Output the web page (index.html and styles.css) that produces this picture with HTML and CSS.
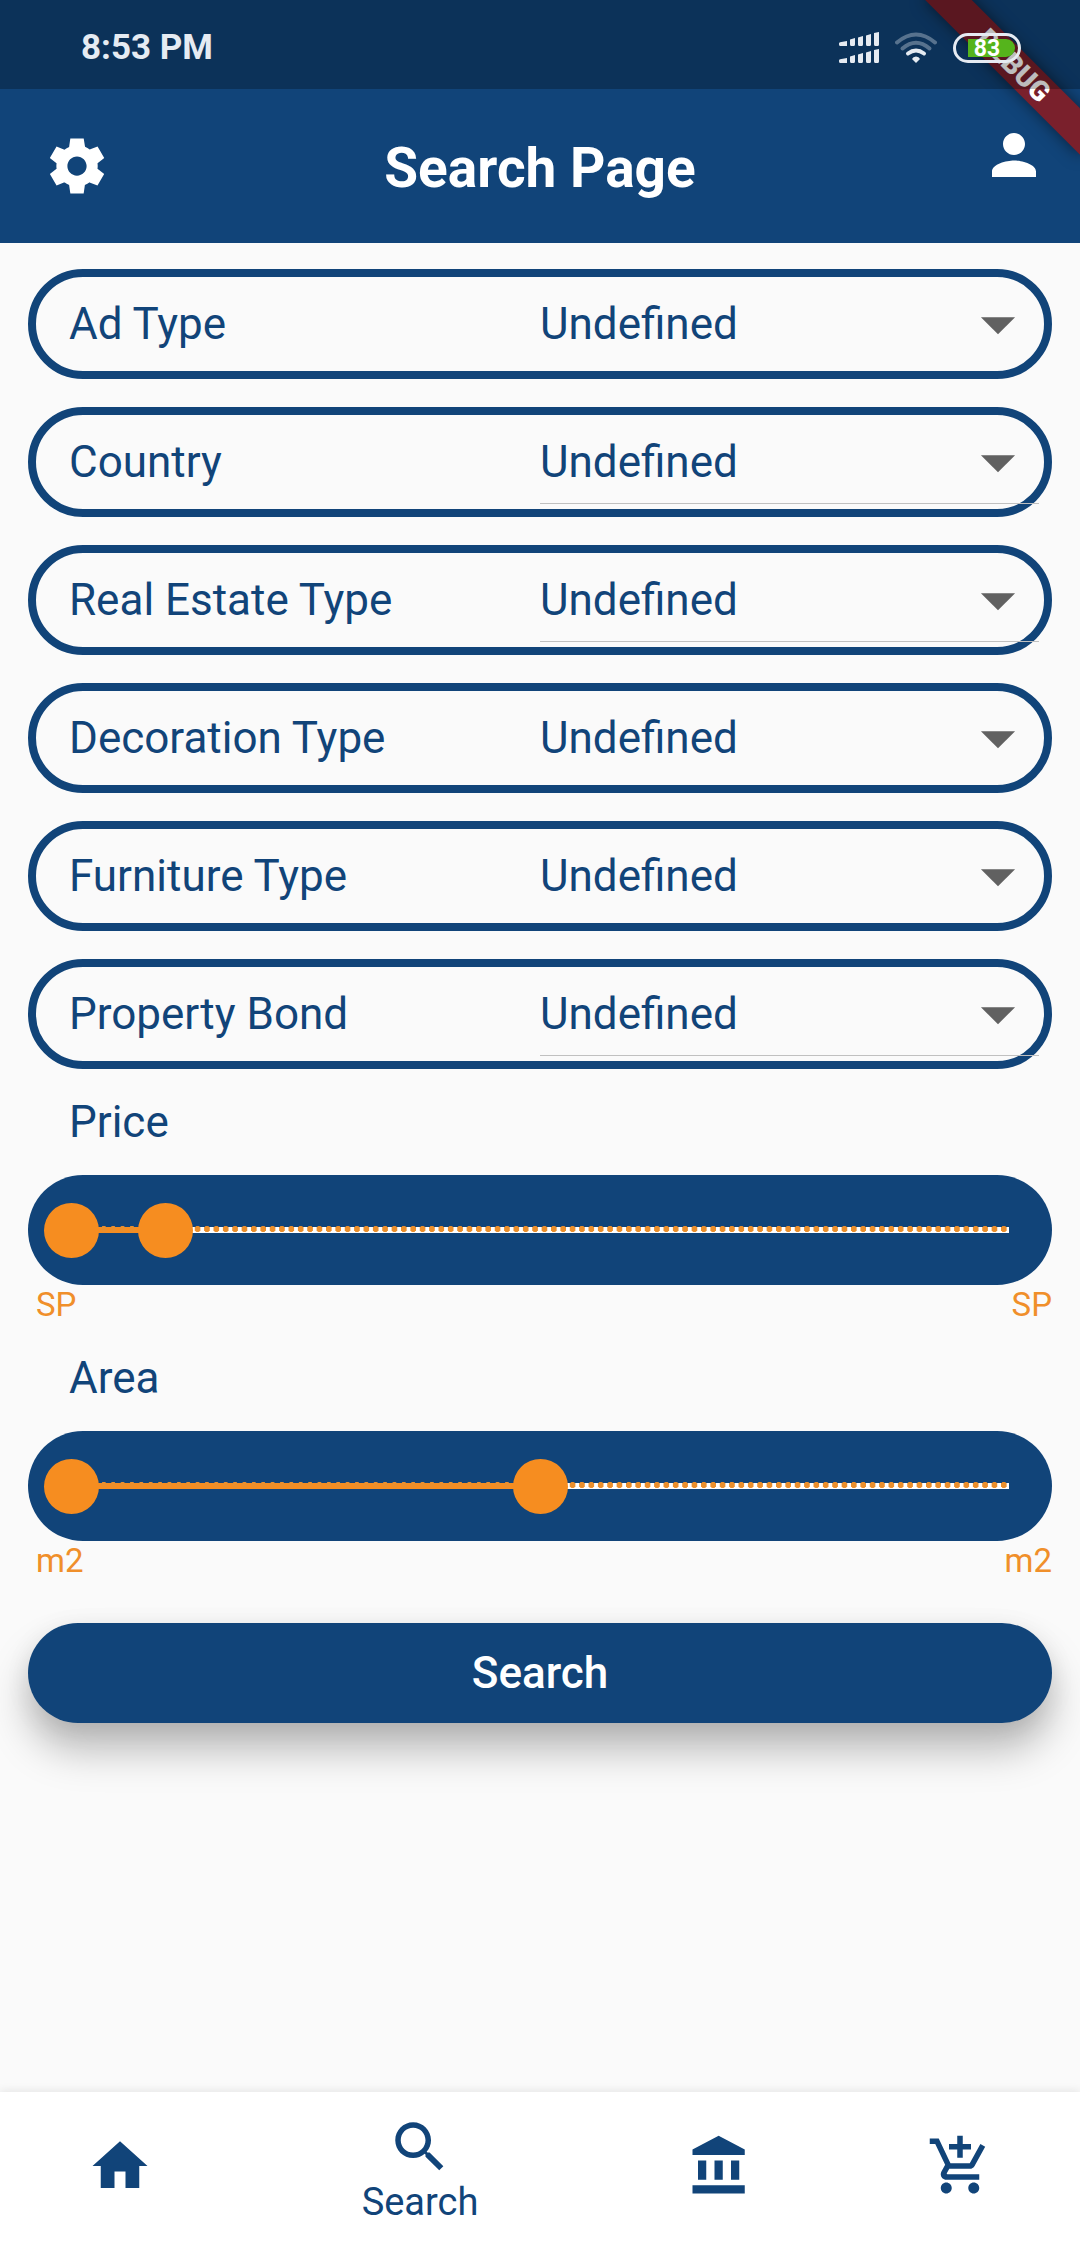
FILE: index.html
```html
<!DOCTYPE html>
<html lang="en">
<head>
<meta charset="utf-8">
<meta name="viewport" content="width=device-width, initial-scale=1">
<title>Search Page</title>
<link rel="stylesheet" href="styles.css">
</head>
<body>
<header class="header">
  <div class="banner" aria-hidden="true">DEBUG</div>
  <div class="status">
    <span class="status-time">8:53 PM</span>
    <div class="status-icons">
      <svg class="signal" viewBox="0 0 40 32" aria-hidden="true">
        <g id="bars">
          <path d="M0 11.500Q0 10.500 1 10.300L8 9V14H1.500Q0 14 0 12.500ZM11 7.500L16 6V12.500Q16 14 14.500 14H12.500Q11 14 11 12.500ZM19 5.500L24 4V12.500Q24 14 22.500 14H20.500Q19 14 19 12.500ZM27 3.500L32 2V12.500Q32 14 30.500 14H28.500Q27 14 27 12.500ZM35 1L40 0V12.500Q40 14 38.500 14H36.500Q35 14 35 12.500Z"/>
        </g>
        <use href="#bars" y="17"/>
      </svg>
      <svg class="wifi" viewBox="0 0 42 31" aria-hidden="true">
        <g fill="none" stroke="#e6ebf2" stroke-linecap="round">
          <path d="M2 10.500Q21-5.500 40 10.500" stroke-width="4" opacity=".35"/>
          <path d="M7.500 16.500Q21 5 34.500 16.500" stroke-width="4" opacity=".35"/>
          <path d="M13 21.500Q21 15.500 29 21.500" stroke-width="4"/>
        </g>
        <path d="M21 24.500Q24 24.500 25 27L21 31L17 27Q18 24.500 21 24.500Z" fill="#e6ebf2"/>
      </svg>
      <svg class="battery" viewBox="0 0 68 30" role="img" aria-label="Battery 83%">
        <path d="M15 6H53A9 9 0 0 1 53 24H15Z" fill="#55b41c"/>
        <rect x="1.500" y="1.500" width="65" height="27" rx="13.500" fill="none" stroke="#e6ebf2" stroke-width="3"/>
        <text x="34" y="23" text-anchor="middle" class="battery-text">83</text>
      </svg>
    </div>
  </div>
  <div class="appbar">
    <button class="icon-btn settings" type="button" aria-label="Settings">
      <svg class="icon" viewBox="0 0 24 24"><path d="M19.440 12.990l.01-.02c.04-.32.08-.64.08-.99 0-.34-.03-.66-.07-.99l.01.02 2.440-1.920-2.430-4.220-2.870 1.160.01.01c-.52-.4-1.090-.74-1.710-1h.01L14.440 2H9.570l-.44 3.070h.01c-.62.26-1.190.6-1.710 1l.01-.01-2.880-1.170-2.440 4.220 2.440 1.920.01-.02c-.04.33-.07.65-.07.99 0 .35.03.68.08.99l-.01-.02-2.100 1.650-.33.26 2.430 4.200 2.880-1.150-.02-.04c.53.41 1.100.75 1.730 1.010h-.03L9.580 22h4.850s.03-.18.06-.42l.38-2.650h-.01c.62-.26 1.200-.6 1.730-1.010l-.02.04 2.880 1.150 2.430-4.200s-.14-.12-.33-.26l-2.110-1.660zM12 15.500c-1.930 0-3.500-1.570-3.500-3.500s1.570-3.500 3.500-3.500 3.500 1.570 3.500 3.500-1.570 3.500-3.500 3.500z"/></svg>
    </button>
    <h1 class="title">Search Page</h1>
    <button class="icon-btn profile" type="button" aria-label="Profile">
      <svg class="icon" viewBox="0 0 24 24"><path d="M12 12c2.210 0 4-1.790 4-4s-1.790-4-4-4-4 1.790-4 4 1.790 4 4 4zm0 2c-2.670 0-8 1.340-8 4v2h16v-2c0-2.660-5.330-4-8-4z"/></svg>
    </button>
  </div>
</header>

<main class="main">
  <form class="form">
    <div class="field">
      <label class="field-label" for="ad-type">Ad Type</label>
      <div class="picker">
        <select id="ad-type"><option>Undefined</option></select>
        <svg class="arrow" viewBox="0 0 24 24" aria-hidden="true"><path d="M7 10l5 5 5-5z"/></svg>
      </div>
    </div>
    <div class="field">
      <label class="field-label" for="country">Country</label>
      <div class="picker picker-lined">
        <select id="country"><option>Undefined</option></select>
        <svg class="arrow" viewBox="0 0 24 24" aria-hidden="true"><path d="M7 10l5 5 5-5z"/></svg>
      </div>
    </div>
    <div class="field">
      <label class="field-label" for="estate-type">Real Estate Type</label>
      <div class="picker picker-lined">
        <select id="estate-type"><option>Undefined</option></select>
        <svg class="arrow" viewBox="0 0 24 24" aria-hidden="true"><path d="M7 10l5 5 5-5z"/></svg>
      </div>
    </div>
    <div class="field">
      <label class="field-label" for="decoration">Decoration Type</label>
      <div class="picker">
        <select id="decoration"><option>Undefined</option></select>
        <svg class="arrow" viewBox="0 0 24 24" aria-hidden="true"><path d="M7 10l5 5 5-5z"/></svg>
      </div>
    </div>
    <div class="field">
      <label class="field-label" for="furniture">Furniture Type</label>
      <div class="picker">
        <select id="furniture"><option>Undefined</option></select>
        <svg class="arrow" viewBox="0 0 24 24" aria-hidden="true"><path d="M7 10l5 5 5-5z"/></svg>
      </div>
    </div>
    <div class="field">
      <label class="field-label" for="bond">Property Bond</label>
      <div class="picker picker-lined">
        <select id="bond"><option>Undefined</option></select>
        <svg class="arrow" viewBox="0 0 24 24" aria-hidden="true"><path d="M7 10l5 5 5-5z"/></svg>
      </div>
    </div>

    <label class="range-label" for="price-max">Price</label>
    <div class="range">
      <div class="slider">
        <div class="track"><div class="track-fill" style="width: 10%"></div></div>
        <div class="ticks"></div>
        <input type="range" min="0" max="100" value="0" aria-label="Minimum price">
        <input type="range" min="0" max="100" value="10" id="price-max">
      </div>
      <div class="units"><span>SP</span><span>SP</span></div>
    </div>

    <label class="range-label" for="area-max">Area</label>
    <div class="range">
      <div class="slider">
        <div class="track"><div class="track-fill" style="width: 50%"></div></div>
        <div class="ticks"></div>
        <input type="range" min="0" max="100" value="0" aria-label="Minimum area">
        <input type="range" min="0" max="100" value="50" id="area-max">
      </div>
      <div class="units"><span>m2</span><span>m2</span></div>
    </div>

    <button class="submit" type="button">Search</button>
  </form>
</main>

<nav class="nav">
  <a class="nav-item" href="#home" aria-label="Home">
    <svg class="icon" viewBox="0 0 24 24"><path d="M10 20v-6h4v6h5v-8h3L12 3 2 12h3v8z"/></svg>
  </a>
  <a class="nav-item nav-active" href="#search" aria-current="page">
    <svg class="icon" viewBox="0 0 24 24"><path d="M15.500 14h-.79l-.28-.27C15.410 12.590 16 11.110 16 9.500 16 5.910 13.090 3 9.500 3S3 5.910 3 9.500 5.910 16 9.500 16c1.610 0 3.090-.59 4.230-1.570l.27.28v.79l5 4.990L20.490 19l-4.990-5zm-6 0C7.010 14 5 11.990 5 9.500S7.010 5 9.500 5 14 7.010 14 9.500 11.990 14 9.500 14z"/></svg>
    <span>Search</span>
  </a>
  <a class="nav-item" href="#bank" aria-label="Offices">
    <svg class="icon" viewBox="0 0 24 24"><path d="M4 10v7h3v-7H4zm6 0v7h3v-7h-3zM2 22h19v-3H2v3zm14-12v7h3v-7h-3zm-4.500-9L2 6v2h19V6l-9.500-5z"/></svg>
  </a>
  <a class="nav-item" href="#cart" aria-label="Add to cart">
    <svg class="icon" viewBox="0 0 24 24"><path d="M11 9h2V6h3V4h-3V1h-2v3H8v2h3v3zm-4 9c-1.100 0-1.990.9-1.990 2S5.900 22 7 22s2-.9 2-2-.9-2-2-2zm10 0c-1.100 0-1.990.9-1.990 2s.89 2 1.990 2 2-.9 2-2-.9-2-2-2zm-9.830-3.250l.03-.12.9-1.630h7.450c.75 0 1.410-.41 1.750-1.030l3.860-7.010L19.420 4h-.01l-1.100 2-2.760 5H8.530l-.13-.27L6.160 6l-.95-2-.94-2H1v2h2l3.600 7.590-1.350 2.450c-.16.28-.25.61-.25.96 0 1.100.9 2 2 2h12v-2H7.420c-.13 0-.25-.11-.25-.25z"/></svg>
  </a>
</nav>
</body>
</html>
```

FILE: styles.css
```css
:root {
  --navy: #114479;
  --orange: #f68d20;
  --page: #fafafa;
}

* {
  box-sizing: border-box;
}

body {
  margin: 0;
  min-height: 100vh;
  display: flex;
  flex-direction: column;
  background: var(--page);
  color: var(--navy);
  font-family: Roboto, "Liberation Sans", sans-serif;
  font-size: 44px;
}

button,
select {
  font: inherit;
  color: inherit;
  border: 0;
  background: none;
  padding: 0;
}

.icon {
  display: block;
  width: 66px;
  height: 66px;
  fill: currentColor;
}

/* Header */

.header {
  position: relative;
  overflow: hidden;
  background: var(--navy);
  color: #fff;
}

.status {
  position: relative;
  display: flex;
  align-items: center;
  justify-content: space-between;
  height: 89px;
  padding: 6px 59px 0 81px;
  background: rgba(0, 0, 0, 0.26);
  color: #e6ebf2;
}

.status-time {
  font-size: 35px;
  font-weight: 700;
}

.status-icons {
  display: flex;
  align-items: center;
  gap: 16px;
}

.signal {
  width: 40px;
  height: 32px;
  fill: #e6ebf2;
}

.wifi {
  width: 42px;
  height: 31px;
}

.battery {
  width: 68px;
  height: 30px;
}

.battery-text {
  fill: #fff;
  font-size: 23px;
  font-weight: 700;
}

/* Diagonal ribbon across the top right corner */
.banner {
  position: absolute;
  top: 49px;
  right: -44px;
  width: 220px;
  height: 33px;
  transform: rotate(45deg);
  background: #7a202c;
  box-shadow: 0 0 16px rgba(0, 0, 0, 0.5);
  font-size: 28px;
  font-weight: 900;
  line-height: 33px;
  text-align: center;
}

.appbar {
  display: grid;
  grid-template-columns: 1fr auto 1fr;
  align-items: center;
  height: 154px;
  padding: 0 33px;
}

.title {
  margin: 0;
  padding-top: 4px;
  font-size: 55px;
  font-weight: 700;
}

.settings {
  justify-self: start;
  padding-left: 11px;
}

.profile {
  justify-self: end;
  padding-bottom: 22px;
}

/* Form */

.main {
  flex: 1;
  padding: 26px 28px 28px;
}

.form {
  display: flex;
  flex-direction: column;
  gap: 28px;
}

.field {
  display: grid;
  grid-template-columns: 1fr 1fr;
  align-items: center;
  height: 110px;
  border: 8px solid var(--navy);
  border-radius: 55px;
}

.field-label {
  padding-left: 33px;
}

.picker {
  display: grid;
  align-items: center;
  height: 84px;
  margin-right: 5px;
  border: solid transparent;
  border-width: 1px 0;
}

.picker-lined {
  border-bottom-color: #c0c0c0;
}

.picker select {
  grid-area: 1 / 1;
  width: 100%;
  height: 82px;
  appearance: none;
}

.arrow {
  grid-area: 1 / 1;
  justify-self: end;
  width: 82px;
  height: 82px;
  fill: #616161;
  pointer-events: none;
}

.range-label {
  padding-left: 41px;
  line-height: 50px;
}

.slider {
  display: grid;
  align-items: center;
  height: 110px;
  padding: 0 16px;
  border-radius: 55px;
  background: var(--navy);
}

.slider > * {
  grid-area: 1 / 1;
}

.track {
  height: 6px;
  margin: 0 27px;
  background: #fff;
}

.track-fill {
  height: 100%;
  background: var(--orange);
}

.ticks {
  height: 6px;
  margin: 0 27px 2px;
  background: radial-gradient(circle closest-side, #eb8f2c 95%, transparent) 0 0 / 1% 100%;
}

.slider input {
  width: 100%;
  height: 55px;
  margin: 0;
  appearance: none;
  background: none;
  pointer-events: none;
}

.slider input::-webkit-slider-thumb {
  width: 55px;
  height: 55px;
  appearance: none;
  border: 0;
  border-radius: 50%;
  background: var(--orange);
  pointer-events: auto;
}

.units {
  display: flex;
  justify-content: space-between;
  padding-left: 8px;
  color: #f08f2a;
  font-size: 33px;
  line-height: 40px;
}

.submit {
  height: 100px;
  margin-top: 14px;
  border-radius: 50px;
  background: var(--navy);
  color: #fff;
  font-weight: 500;
  box-shadow: 0 27px 40px rgba(0, 0, 0, 0.26), 0 6px 26px rgba(0, 0, 0, 0.08);
}

/* Bottom navigation */

.nav {
  display: flex;
  height: 154px;
  background: #fff;
  box-shadow: 0 -2px 8px rgba(0, 0, 0, 0.08);
}

.nav-item {
  flex: 2;
  display: flex;
  flex-direction: column;
  align-items: center;
  justify-content: center;
  padding-bottom: 6px;
  color: var(--navy);
  font-size: 38px;
  line-height: 44px;
  text-decoration: none;
}

.nav-active {
  flex: 3;
  padding-bottom: 0;
}
```
